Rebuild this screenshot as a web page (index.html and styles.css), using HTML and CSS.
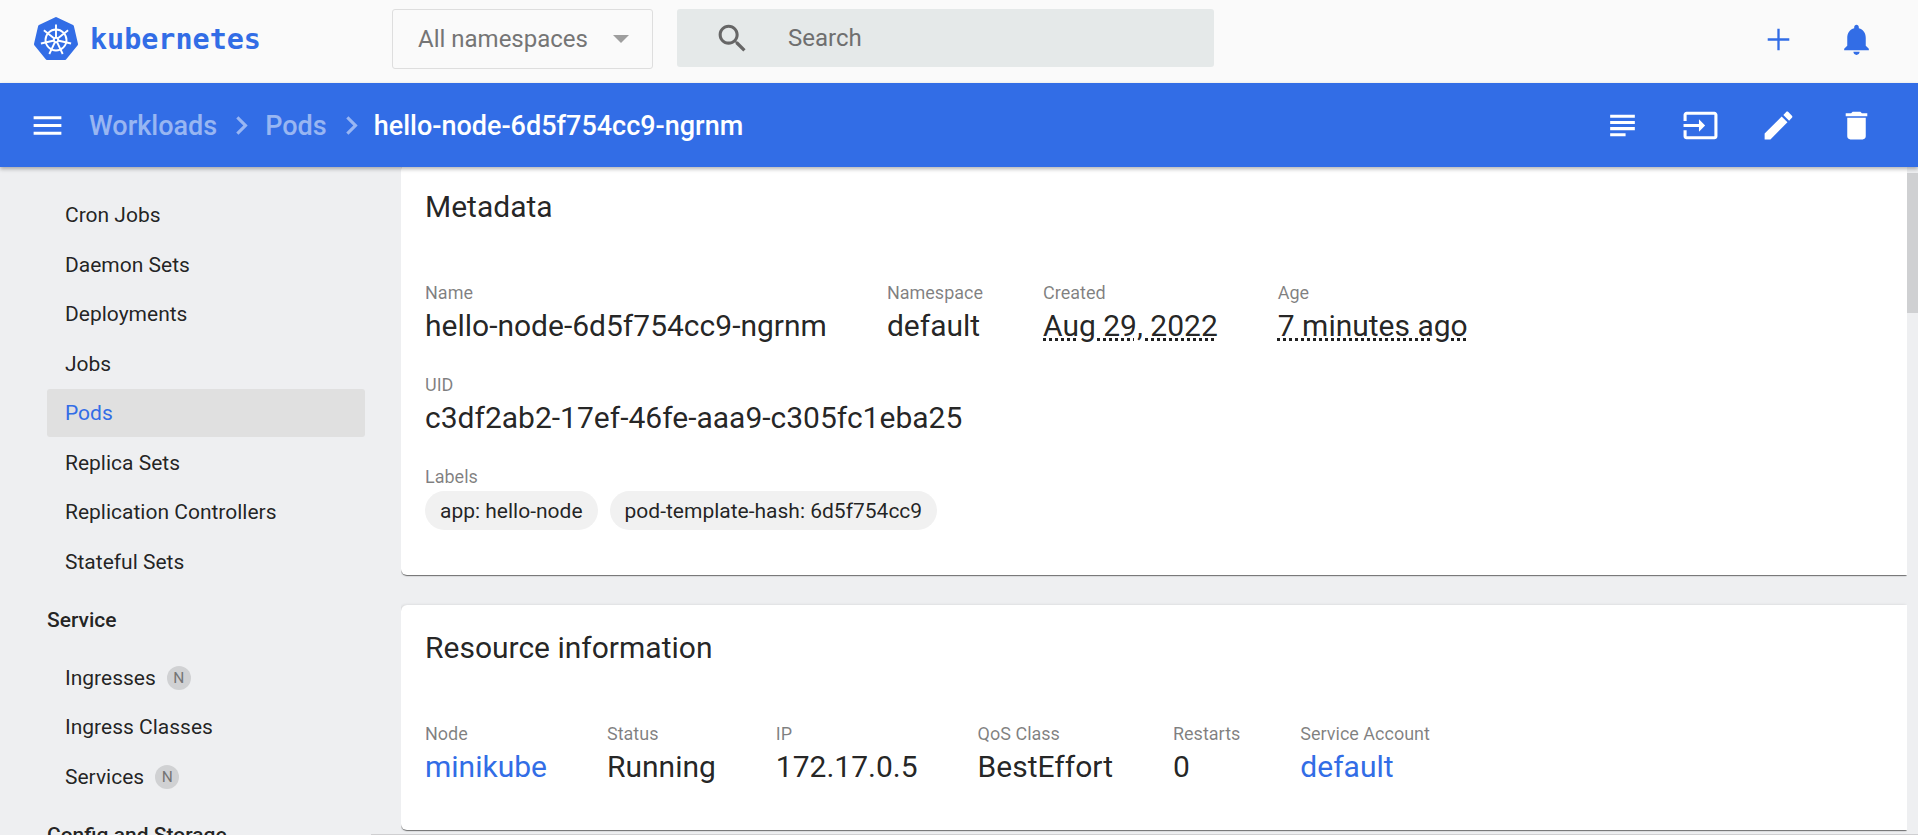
FILE: index.html
```html
<!DOCTYPE html>
<html lang="en">
<head>
<meta charset="utf-8">
<title>hello-node-6d5f754cc9-ngrnm - Kubernetes Dashboard</title>
<link rel="stylesheet" href="styles.css">
</head>
<body>
<header class="toolbar">
  <div class="brand">
    <svg class="logo" viewBox="0 0 44 46" aria-hidden="true">
      <polygon class="logo-hept" points="22,2.5 38.4,10.4 42.5,28.2 31.1,42.4 12.9,42.4 1.5,28.2 5.6,10.4"/>
      <g class="logo-wheel">
        <circle cx="22" cy="24" r="10.5"/>
        <circle cx="22" cy="24" r="2.2"/>
        <path d="M22 8.5V21M34.1 14.3L24.3 22.1M37.1 27.5L24.9 24.7M28.7 38L23.3 26.7M15.3 38L20.7 26.7M6.9 27.5L19.1 24.7M9.9 14.3L19.7 22.1"/>
      </g>
    </svg>
    <span class="wordmark">kubernetes</span>
  </div>
  <div class="ns-select">
    <span class="ns-text">All namespaces</span>
    <span class="ns-arrow"></span>
  </div>
  <div class="search">
    <svg class="icon icon-search" viewBox="0 0 24 24"><path d="M15.5 14h-.79l-.28-.27C15.41 12.59 16 11.11 16 9.5 16 5.91 13.09 3 9.5 3S3 5.91 3 9.5 5.91 16 9.5 16c1.61 0 3.09-.59 4.23-1.57l.27.28v.79l5 4.99L20.49 19l-4.99-5zm-6 0C7.01 14 5 11.99 5 9.5S7.01 5 9.5 5 14 7.01 14 9.5 11.99 14 9.5 14z"/></svg>
    <span class="search-text">Search</span>
  </div>
  <div class="actions actions-top">
    <svg class="icon" viewBox="0 0 24 24"><path d="M19 12.75h-6.25V19h-1.5v-6.25H5v-1.5h6.25V5h1.5v6.25H19v1.5z"/></svg>
    <svg class="icon" viewBox="0 0 24 24"><path d="M12 22c1.1 0 2-.9 2-2h-4c0 1.1.89 2 2 2zm6-6v-5c0-3.07-1.64-5.64-4.5-6.32V4c0-.83-.67-1.5-1.5-1.5s-1.5.67-1.5 1.5v.68C7.63 5.36 6 7.92 6 11v5l-2 2v1h16v-1l-2-2z"/></svg>
  </div>
</header>

<div class="appbar">
  <svg class="icon menu" viewBox="0 0 24 24"><path d="M3 18h18v-2H3v2zm0-5h18v-2H3v2zm0-7v2h18V6H3z"/></svg>
  <nav class="crumbs">
    <span class="crumb">Workloads</span>
    <svg class="icon chev" viewBox="0 0 24 24"><path d="M10 6L8.59 7.41 13.17 12l-4.58 4.59L10 18l6-6z"/></svg>
    <span class="crumb">Pods</span>
    <svg class="icon chev" viewBox="0 0 24 24"><path d="M10 6L8.59 7.41 13.17 12l-4.58 4.59L10 18l6-6z"/></svg>
    <span class="crumb crumb-current">hello-node-6d5f754cc9-ngrnm</span>
  </nav>
  <div class="actions">
    <svg class="icon" viewBox="0 0 24 24"><path d="M14 17H4v2h10v-2zm6-8H4v2h16V9zM4 15h16v-2H4v2zM4 5v2h16V5H4z"/></svg>
    <svg class="icon" viewBox="0 0 24 24"><path d="M21 3.01H3c-1.1 0-2 .9-2 2V9h2V4.99h18v14.03H3V15H1v4.01c0 1.1.9 1.98 2 1.98h18c1.1 0 2-.88 2-1.98v-14c0-1.11-.9-2-2-2zM11 16l4-4-4-4v3H1v2h10v3z"/></svg>
    <svg class="icon" viewBox="0 0 24 24"><path d="M3 17.25V21h3.75L17.81 9.94l-3.75-3.75L3 17.25zM20.71 7.04c.39-.39.39-1.02 0-1.41l-2.34-2.34c-.39-.39-1.02-.39-1.41 0l-1.83 1.83 3.75 3.75 1.83-1.83z"/></svg>
    <svg class="icon" viewBox="0 0 24 24"><path d="M6 19c0 1.1.9 2 2 2h8c1.1 0 2-.9 2-2V7H6v12zM19 4h-3.5l-1-1h-5l-1 1H5v2h14V4z"/></svg>
  </div>
</div>

<div class="body-row">
  <aside class="sidebar">
    <ul class="nav">
      <li class="nav-item">Cron Jobs</li>
      <li class="nav-item">Daemon Sets</li>
      <li class="nav-item">Deployments</li>
      <li class="nav-item">Jobs</li>
      <li class="nav-item nav-active">Pods</li>
      <li class="nav-item">Replica Sets</li>
      <li class="nav-item">Replication Controllers</li>
      <li class="nav-item">Stateful Sets</li>
    </ul>
    <h3 class="nav-head">Service</h3>
    <ul class="nav">
      <li class="nav-item">Ingresses <span class="badge">N</span></li>
      <li class="nav-item">Ingress Classes</li>
      <li class="nav-item">Services <span class="badge">N</span></li>
    </ul>
    <h3 class="nav-head">Config and Storage</h3>
  </aside>

  <main class="content">
    <section class="card card-scrolled">
      <h2 class="card-title">Metadata</h2>
      <div class="row row-first">
        <div class="field"><div class="label">Name</div><div class="value">hello-node-6d5f754cc9-ngrnm</div></div>
        <div class="field"><div class="label">Namespace</div><div class="value">default</div></div>
        <div class="field"><div class="label">Created</div><div class="value"><span class="dotted">Aug 29, 2022</span></div></div>
        <div class="field"><div class="label">Age</div><div class="value"><span class="dotted">7 minutes ago</span></div></div>
      </div>
      <div class="row">
        <div class="field"><div class="label">UID</div><div class="value">c3df2ab2-17ef-46fe-aaa9-c305fc1eba25</div></div>
      </div>
      <div class="row">
        <div class="field">
          <div class="label">Labels</div>
          <div class="chips">
            <span class="chip">app: hello-node</span>
            <span class="chip">pod-template-hash: 6d5f754cc9</span>
          </div>
        </div>
      </div>
    </section>

    <section class="card">
      <h2 class="card-title">Resource information</h2>
      <div class="row row-first">
        <div class="field"><div class="label">Node</div><div class="value link">minikube</div></div>
        <div class="field"><div class="label">Status</div><div class="value">Running</div></div>
        <div class="field"><div class="label">IP</div><div class="value">172.17.0.5</div></div>
        <div class="field"><div class="label">QoS Class</div><div class="value">BestEffort</div></div>
        <div class="field"><div class="label">Restarts</div><div class="value">0</div></div>
        <div class="field"><div class="label">Service Account</div><div class="value link">default</div></div>
      </div>
    </section>
  </main>

  <div class="scrolltrack"><div class="scrollthumb"></div></div>
</div>
<div class="edge-line"></div>
</body>
</html>
```

FILE: styles.css
```css
* { box-sizing: border-box; }

html, body {
  margin: 0;
  height: 100%;
  overflow: hidden;
}

body {
  display: flex;
  flex-direction: column;
  background: #eeeff1;
  color: rgba(0, 0, 0, 0.87);
  font-family: Roboto, "Liberation Sans", sans-serif;
}

.icon {
  width: 37px;
  height: 37px;
  flex: none;
  fill: currentColor;
  display: block;
}

/* top toolbar */
.toolbar {
  flex: none;
  height: 83px;
  background: #fafafa;
  display: flex;
  align-items: center;
  color: #326de6;
}

.brand {
  width: 392px;
  display: flex;
  align-items: center;
  padding-left: 34px;
}

.logo {
  width: 44px;
  height: 46px;
  flex: none;
  margin-right: 12px;
  position: relative;
  top: -3px;
}

.logo-hept {
  fill: #326de6;
  stroke: #326de6;
  stroke-width: 3;
  stroke-linejoin: round;
}

.logo-wheel {
  fill: none;
  stroke: #fff;
  stroke-width: 1.9;
}

.wordmark {
  font-family: "DejaVu Sans Mono", "Liberation Mono", monospace;
  font-weight: 700;
  font-size: 28.4px;
  color: #326de6;
  position: relative;
  top: -2px;
}

.ns-select {
  width: 261px;
  height: 60px;
  margin-top: -5px;
  border: 1px solid #dedede;
  border-radius: 3px;
  display: flex;
  align-items: center;
  padding-left: 25px;
  color: #757575;
  font-size: 24px;
}

.ns-arrow {
  margin-left: 25px;
  width: 0;
  height: 0;
  border-left: 8px solid transparent;
  border-right: 8px solid transparent;
  border-top: 8px solid #9e9e9e;
}

.search {
  width: 537px;
  height: 58px;
  margin-left: 24px;
  margin-top: -7px;
  background: #e5e9e9;
  border-radius: 3px;
  display: flex;
  align-items: center;
  padding-left: 37px;
  color: #6f6f6f;
  font-size: 24px;
}

.icon-search {
  color: #666;
  margin-right: 37px;
}

.actions {
  margin-left: auto;
  display: flex;
  align-items: center;
  gap: 41px;
  padding-right: 43.5px;
}

.actions-top {
  margin-top: -5px;
}

/* blue bar */
.appbar {
  flex: none;
  height: 84px;
  background: #326de6;
  color: #fff;
  display: flex;
  align-items: center;
  padding-left: 29px;
  box-shadow: 0 2px 4px rgba(0, 0, 0, 0.3);
  position: relative;
  z-index: 2;
}

.crumbs {
  margin-left: 23px;
  display: flex;
  align-items: center;
  font-size: 27px;
  font-weight: 500;
  line-height: 37px;
}

.crumb {
  color: rgba(255, 255, 255, 0.5);
  padding-top: 3px;
}

.crumb-current {
  color: #fff;
  margin-left: -1px;
}

.chev {
  color: rgba(255, 255, 255, 0.5);
  margin: 0 5px 0 6px;
}

/* body */
.body-row {
  flex: 1;
  min-height: 0;
  display: flex;
}

.sidebar {
  flex: none;
  width: 401px;
  overflow: hidden;
  padding: 24px 36px 0 47px;
}

.nav {
  list-style: none;
  margin: 0;
  padding: 0;
  display: flex;
  flex-direction: column;
  gap: 1.55px;
}

.nav-item {
  height: 48px;
  display: flex;
  align-items: center;
  padding-left: 18px;
  font-size: 21px;
  border-radius: 3px;
  color: rgba(0, 0, 0, 0.87);
}

.nav-active {
  background: #e0e0e0;
  color: #326de6;
}

.nav-head {
  margin: 10px 0;
  height: 48px;
  display: flex;
  align-items: center;
  font-size: 21px;
  font-weight: 500;
  color: rgba(0, 0, 0, 0.87);
}

.badge {
  width: 24px;
  height: 24px;
  border-radius: 50%;
  margin-left: 11px;
  background: #d0d1d3;
  color: #757575;
  font-size: 15.5px;
  display: flex;
  align-items: center;
  justify-content: center;
}

.content {
  flex: 1;
  min-width: 0;
  overflow: hidden;
}

.card {
  background: #fff;
  border-radius: 6px 0 0 6px;
  padding: 23px 24px 45px 24px;
  margin-bottom: 30px;
  box-shadow: 0 2px 1px -1px rgba(0, 0, 0, 0.35), 0 1px 1px 0 rgba(0, 0, 0, 0.25), -1px 0 3px 0 rgba(0, 0, 0, 0.12);
}

.card-scrolled {
  margin-top: -3px;
}

.card-title {
  margin: 0;
  font-size: 30px;
  line-height: 40px;
  font-weight: 400;
  color: rgba(0, 0, 0, 0.87);
}

.row {
  display: flex;
  gap: 60px;
  margin-top: 30px;
}

.row-first {
  margin-top: 55px;
}

.label {
  font-size: 18px;
  line-height: 22px;
  color: rgba(0, 0, 0, 0.5);
}

.value {
  margin-top: 4px;
  font-size: 30px;
  line-height: 36px;
  white-space: nowrap;
}

.link {
  color: #326de6;
}

.dotted {
  text-decoration: underline dotted;
  text-underline-offset: 2px;
}

.chips {
  display: flex;
  gap: 12px;
  margin-top: 3px;
}

.chip {
  height: 39px;
  padding: 0 15px;
  border-radius: 20px;
  background: #f1f1f1;
  display: flex;
  align-items: center;
  font-size: 21px;
}

.scrolltrack {
  flex: none;
  width: 11px;
  background: #eeeff1;
  padding-top: 6px;
  position: relative;
  z-index: 1;
}

.scrollthumb {
  height: 140px;
  background: #cfd0d2;
}

/* hairline along the very bottom edge of the window */
.edge-line {
  position: absolute;
  left: 371px;
  right: 0;
  bottom: 0;
  height: 1px;
  background: #cfcfd1;
  z-index: 3;
}
```
